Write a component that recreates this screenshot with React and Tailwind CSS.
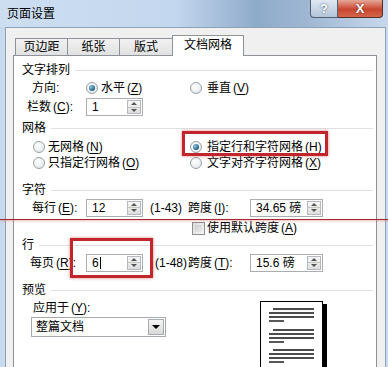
import React from 'react';

const Mn = ({ k }) => (
  <span className="ml-[2px]">
    (<span className="underline underline-offset-2">{k}</span>)
  </span>
);

const Radio = ({ on }) => (
  <span className="flex h-[12px] w-[12px] shrink-0 items-center justify-center rounded-full border border-[#97a0a8] bg-[radial-gradient(circle_at_40%_35%,#ffffff_0%,#dfe3e6_100%)]">
    {on && <span className="h-[6px] w-[6px] rounded-full bg-[radial-gradient(circle_at_35%_35%,#8ccbe6_0%,#1f5c80_70%)]" />}
  </span>
);

const Check = () => (
  <span className="block h-[13px] w-[13px] shrink-0 border border-[#8f8f8f] bg-[linear-gradient(135deg,#dcdcdc,#f6f6f6)] p-[2px]">
    <span className="block h-full w-full bg-[linear-gradient(135deg,#cfcfcf,#ececec)]" />
  </span>
);

const Arrows = () => (
  <div className="flex w-[14px] shrink-0 flex-col border border-[#b4b8bf] bg-[linear-gradient(180deg,#f7f7f7,#dedede)]">
    <div className="flex flex-1 items-center justify-center border-b border-[#c4c4c4]">
      <span className="h-0 w-0 border-x-[3px] border-b-[3px] border-x-transparent border-b-[#555]" />
    </div>
    <div className="flex flex-1 items-center justify-center">
      <span className="h-0 w-0 border-x-[3px] border-t-[3px] border-x-transparent border-t-[#555]" />
    </div>
  </div>
);

const Spin = ({ value, className, cursor }) => (
  <div className={`flex h-[18px] shrink-0 border border-[#abadb3] bg-white p-px ${className}`}>
    <span className="flex flex-1 items-center overflow-hidden pl-[4px]">
      {value}
      {cursor && <span className="ml-px h-[12px] w-px bg-black" />}
    </span>
    <Arrows />
  </div>
);

const Section = ({ title, className = '' }) => (
  <div className={`flex h-[18px] items-center pl-[8px] ${className}`}>
    <span>{title}</span>
    <span className="ml-[5px] mr-[3px] h-px flex-1 bg-[#dde1e5]" />
  </div>
);

const Tab = ({ label, className = '' }) => (
  <div
    className={`flex h-[17px] items-center justify-center border border-b-0 border-[#8e9299] bg-[linear-gradient(180deg,#f2f2f2,#e1e1e1)] ${className}`}
  >
    {label}
  </div>
);

const Preview = () => {
  const groups = [8, 29, 49];
  return (
    <svg width="68" height="66" className="mt-[2px] block" viewBox="0 0 68 66">
      <rect x="63" y="3" width="4" height="70" fill="#000" />
      <rect x="0.5" y="0.5" width="62" height="80" fill="#fff" stroke="#000" />
      {groups.map((y) => (
        <g key={y} stroke="#111" strokeWidth="1.4">
          <line x1="13" y1={y} x2="54" y2={y} />
          <line x1="9" y1={y + 4} x2="54" y2={y + 4} />
          <line x1="9" y1={y + 8} x2="54" y2={y + 8} />
          <line x1="9" y1={y + 12} x2="24" y2={y + 12} />
        </g>
      ))}
    </svg>
  );
};

export default function App() {
  return (
    <div className="relative flex h-[367px] w-[388px] flex-col overflow-hidden whitespace-nowrap bg-[#c8daef] font-['Liberation_Sans','Noto_Sans_CJK_SC',sans-serif] text-[12px] leading-none text-black">
      {/* title bar */}
      <div className="flex h-[27px] shrink-0 items-start bg-[linear-gradient(90deg,#cddef1_0%,#c3d7ee_45%,#8fabcb_66%,#9db5d1_78%,#c7d8ec_100%)]">
        <span className="ml-[7px] self-center">页面设置</span>
        <div className="ml-auto mr-[5px] flex h-[18px]">
          <div className="flex w-[28px] items-center justify-center rounded-bl-[4px] border border-t-0 border-[#4f5f74] bg-[linear-gradient(180deg,#dfe8f3,#b3c4d9)] text-[13px] font-bold text-white [text-shadow:0_0_2px_#33445a]">
            ?
          </div>
          <div className="flex w-[45px] items-center justify-center rounded-br-[4px] border border-l-0 border-t-0 border-[#5a2a24] bg-[linear-gradient(180deg,#e7a897,#c9452f_55%,#d2664a)] text-[13px] font-bold text-white [text-shadow:0_0_2px_#5a1a10]">
            X
          </div>
        </div>
      </div>

      {/* dialog body */}
      <div className="ml-[5px] mr-[2px] flex flex-1 flex-col border border-b-0 border-[#8fa1b6] bg-[#f0f0f0] pl-[7px] pr-[8px]">
        <div className="flex h-[27px] shrink-0 items-end pl-[2px]">
          <Tab label="页边距" className="w-[53px]" />
          <Tab label="纸张" className="w-[52px] border-l-0" />
          <Tab label="版式" className="w-[53px] border-l-0" />
          <div className="relative z-10 -mb-px -ml-px flex h-[21px] w-[72px] items-center justify-center border border-b-0 border-[#8e9299] bg-white pb-[2px]">
            文档网格
          </div>
        </div>

        <div className="flex flex-1 flex-col border border-b-0 border-[#8e9299] bg-white pt-[5px]">
          <Section title="文字排列" />
          <div className="flex h-[17px] items-center">
            <span className="w-[72px] pl-[18px]">方向:</span>
            <span className="flex w-[104px] items-center gap-[3px]">
              <Radio on />
              <span>
                水平<Mn k="Z" />
              </span>
            </span>
            <span className="flex items-center gap-[5px]">
              <Radio />
              <span>
                垂直<Mn k="V" />
              </span>
            </span>
          </div>
          <div className="mt-px flex h-[20px] items-center">
            <span className="w-[72px] pl-[13px]">
              栏数<Mn k="C" />:
            </span>
            <Spin value="1" className="w-[57px]" />
          </div>

          <Section title="网格" className="mt-[2px]" />
          <div className="mt-px flex h-[17px] items-center">
            <span className="flex w-[176px] items-center gap-[3px] pl-[19px]">
              <Radio />
              <span>
                无网格<Mn k="N" />
              </span>
            </span>
            <span className="flex items-center gap-[5px]">
              <Radio on />
              <span>
                指定行和字符网格<Mn k="H" />
              </span>
            </span>
          </div>
          <div className="flex h-[16px] items-center">
            <span className="flex w-[176px] items-center gap-[3px] pl-[19px]">
              <Radio />
              <span>
                只指定行网格<Mn k="O" />
              </span>
            </span>
            <span className="flex items-center gap-[5px]">
              <Radio />
              <span>
                文字对齐字符网格<Mn k="X" />
              </span>
            </span>
          </div>

          <Section title="字符" className="mt-[10px]" />
          <div className="flex h-[17px] items-center">
            <span className="w-[72px] pl-[18px]">
              每行<Mn k="E" />:
            </span>
            <Spin value="12" className="w-[57px]" />
            <span className="ml-[7px] w-[38px]">(1-43)</span>
            <span className="w-[62px]">
              跨度<Mn k="I" />:
            </span>
            <Spin value="34.65 磅" className="w-[73px]" />
          </div>
          <div className="mt-[4px] flex h-[16px] items-center">
            <span className="ml-[178px] flex items-center">
              <Check />
            </span>
            <span className="ml-[2px]">
              使用默认跨度<Mn k="A" />
            </span>
          </div>

          <Section title="行" />
          <div className="flex h-[17px] items-center">
            <span className="w-[72px] pl-[16px]">
              每页<Mn k="R" />:
            </span>
            <Spin value="6" cursor className="w-[57px]" />
            <span className="ml-[12px] w-[33px]">(1-48)</span>
            <span className="w-[62px]">
              跨度<Mn k="T" />:
            </span>
            <Spin value="15.6 磅" className="w-[73px]" />
          </div>

          <Section title="预览" className="mt-[10px]" />
          <div className="flex">
            <div className="flex w-[246px] flex-col">
              <span className="flex h-[18px] items-center pl-[19px]">
                应用于<Mn k="Y" />:
              </span>
              <div className="ml-[17px] flex h-[20px] w-[135px] border border-[#a6a9b0] bg-white p-px">
                <span className="flex flex-1 items-center pl-[3px]">整篇文档</span>
                <div className="flex w-[16px] items-center justify-center border border-[#a7abb2] bg-[linear-gradient(180deg,#f6f6f6,#d9d9d9)]">
                  <span className="h-0 w-0 border-x-[4px] border-t-[4px] border-x-transparent border-t-black" />
                </div>
              </div>
            </div>
            <Preview />
          </div>
        </div>
      </div>

      {/* annotations */}
      <div className="absolute left-[182px] top-[131px] h-[25px] w-[146px] border-[3px] border-[#c0262c] shadow-[0_0_3px_rgba(200,40,40,0.6)]" />
      <div className="absolute left-[70px] top-[238px] h-[40px] w-[83px] border-[3px] border-[#c0262c] shadow-[0_0_3px_rgba(200,40,40,0.6)]" />
      <div className="absolute left-0 top-[219px] h-px w-full bg-[#a32a31] shadow-[0_1px_2px_rgba(230,90,90,0.6)]" />
    </div>
  );
}
